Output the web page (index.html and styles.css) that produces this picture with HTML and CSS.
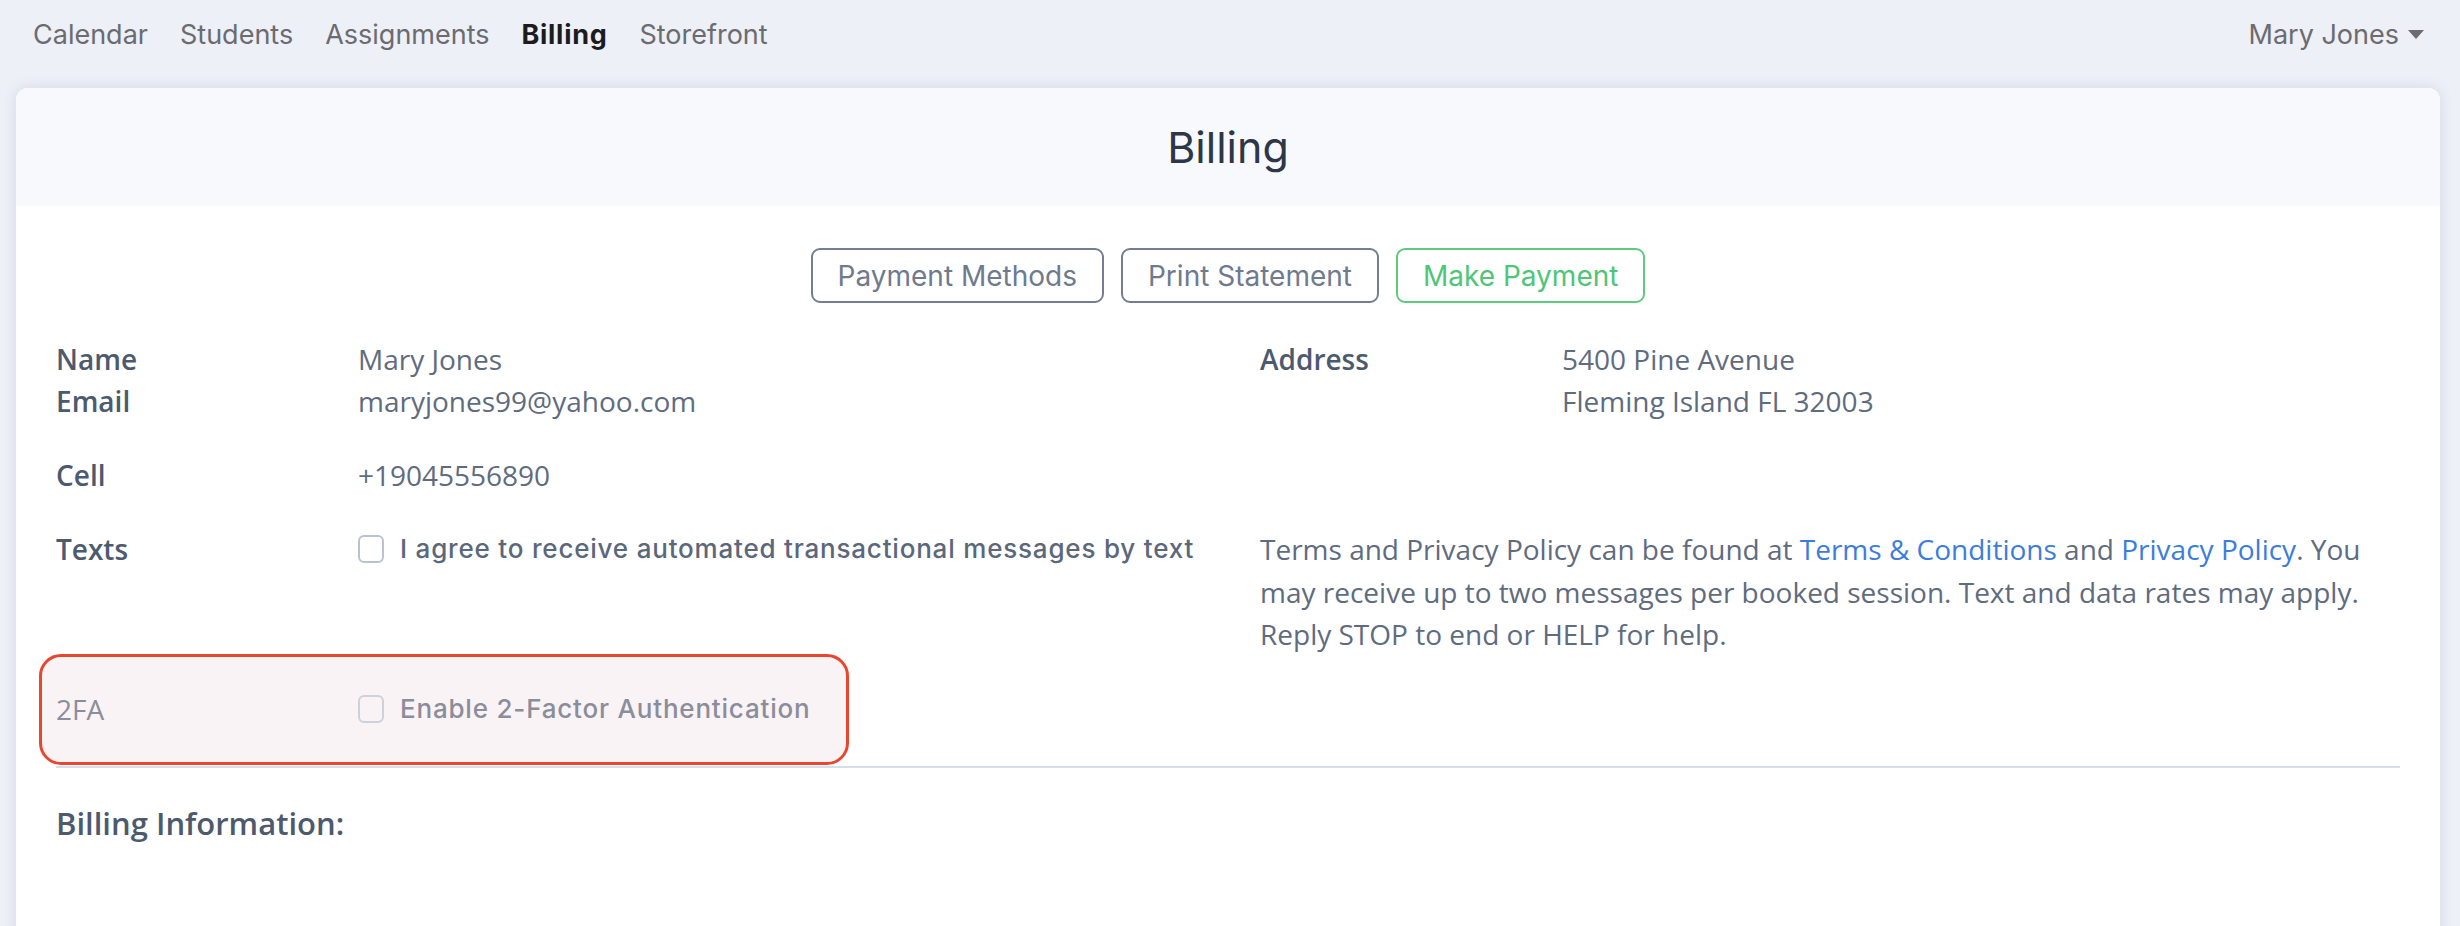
FILE: index.html
```html
<!DOCTYPE html>
<html lang="en">
<head>
<meta charset="utf-8">
<title>Billing</title>
<link rel="stylesheet" href="styles.css">
</head>
<body>
<nav class="topnav">
  <div class="nav-links">
    <a class="nav-link">Calendar</a>
    <a class="nav-link">Students</a>
    <a class="nav-link">Assignments</a>
    <a class="nav-link active">Billing</a>
    <a class="nav-link">Storefront</a>
  </div>
  <div class="user-menu">Mary Jones<span class="caret"></span></div>
</nav>
<main class="card">
  <header class="card-header"><h1 class="card-title">Billing</h1></header>
  <section class="card-body">
    <div class="actions">
      <button class="btn">Payment Methods</button>
      <button class="btn">Print Statement</button>
      <button class="btn btn-green">Make Payment</button>
    </div>

    <div class="info-row">
      <div class="col">
        <div class="field"><span class="label">Name</span><span class="value">Mary Jones</span></div>
        <div class="field"><span class="label">Email</span><span class="value">maryjones99@yahoo.com</span></div>
      </div>
      <div class="col">
        <div class="field"><span class="label">Address</span><span class="value">5400 Pine Avenue<br>Fleming Island FL 32003</span></div>
      </div>
    </div>

    <div class="info-row">
      <div class="col">
        <div class="field"><span class="label">Cell</span><span class="value">+19045556890</span></div>
      </div>
      <div class="col"></div>
    </div>

    <div class="info-row">
      <div class="col">
        <div class="field"><span class="label">Texts</span>
          <label class="check"><span class="box"></span><span class="check-text">I agree to receive automated transactional messages by text</span></label>
        </div>
      </div>
      <div class="col">
        <p class="terms">Terms and Privacy Policy can be found at <a class="link">Terms &amp; Conditions</a> and <a class="link">Privacy Policy</a>. You may receive up to two messages per booked session. Text and data rates may apply. Reply STOP to end or HELP for help.</p>
      </div>
    </div>

    <div class="twofa">
      <div class="field disabled"><span class="label">2FA</span>
        <label class="check"><span class="box"></span><span class="check-text">Enable 2-Factor Authentication</span></label>
      </div>
    </div>

    <hr class="divider">
    <h2 class="section-title">Billing Information:</h2>
  </section>
</main>
</body>
</html>
```
FILE: styles.css
```css
html, body {
  margin: 0;
  padding: 0;
}
body {
  background: #edf0f7;
  height: 926px;
  overflow: hidden;
  font-family: "Open Sans", "Noto Sans", sans-serif;
}
.topnav {
  height: 68px;
  display: flex;
  align-items: center;
  justify-content: space-between;
  padding: 0 36px 0 17px;
  font-family: Inter, "Liberation Sans", sans-serif;
  font-size: 27px;
}
.nav-links {
  display: flex;
}
.nav-link {
  padding: 0 16px;
  color: #6b6b70;
}
.nav-link.active {
  color: #1c1c1e;
  font-weight: 700;
  letter-spacing: 0.7px;
}
.user-menu {
  color: #6b6b70;
  display: flex;
  align-items: center;
}
.caret {
  margin-left: 9px;
  width: 0;
  height: 0;
  border-left: 8px solid transparent;
  border-right: 8px solid transparent;
  border-top: 9px solid #6b6b70;
}
.card {
  margin: 20px 20px 0 16px;
  background: #ffffff;
  border-radius: 12px;
  box-shadow: 0 0 14px rgba(60, 80, 120, 0.14);
  min-height: 900px;
  overflow: hidden;
}
.card-header {
  background: #f7f9fc;
  height: 118px;
  display: flex;
  align-items: center;
  justify-content: center;
}
.card-title {
  margin: 0;
  font-family: Inter, "Liberation Sans", sans-serif;
  font-weight: 400;
  font-size: 43px;
  color: #2d3748;
}
.card-body {
  padding: 42px 40px 0 40px;
}
.actions {
  display: flex;
  justify-content: center;
  gap: 17px;
}
.btn {
  height: 55px;
  padding: 0 25px;
  background: #fff;
  border: 2px solid #747e90;
  border-radius: 9px;
  color: #6f7a8d;
  font-family: Inter, "Liberation Sans", sans-serif;
  font-size: 28px;
}
.btn-green {
  border-color: #5ccb7e;
  color: #4fc577;
}
.info-row {
  display: grid;
  grid-template-columns: 1140px 1140px;
  column-gap: 64px;
  margin-top: 32px;
}
.actions + .info-row {
  margin-top: 35px;
}
.field {
  display: flex;
  line-height: 42px;
  font-size: 28px;
}
.label {
  width: 302px;
  flex: none;
  font-weight: 600;
  color: #4d5a6e;
}
.value {
  color: #5f6b7e;
}
.check {
  display: flex;
  align-items: center;
  height: 42px;
}
.box {
  width: 22px;
  height: 24px;
  border: 2px solid #b8c2d0;
  border-radius: 6px;
  background: #fff;
  margin-right: 16px;
  flex: none;
}
.check-text {
  font-family: Inter, "Liberation Sans", sans-serif;
  font-size: 26px;
  letter-spacing: 0.8px;
  color: #5b677b;
  font-weight: 500;
}
.terms {
  margin: 0;
  font-size: 28px;
  line-height: 42.5px;
  color: #5f6b7e;
}
.link {
  color: #3b7ddd;
}
.twofa {
  margin: -2px 0 0 -17px;
  width: 790px;
  padding: 31px 0 32px 14px;
  border: 3px solid #e8472f;
  border-radius: 22px;
  background: #f9f3f5;
}
.field.disabled .label {
  font-weight: 400;
  color: #8b8d9b;
}
.field.disabled .check-text {
  color: #8b8d9b;
}
.field.disabled .box {
  border-color: #cfd0db;
  background: #f9f3f5;
}
.divider {
  margin: 1px 0 0 0;
  border: 0;
  height: 2px;
  background: #d6dee9;
}
.section-title {
  margin: 34px 0 0 0;
  font-size: 31px;
  line-height: 42px;
  font-weight: 600;
  color: #4d5a6e;
}
```
